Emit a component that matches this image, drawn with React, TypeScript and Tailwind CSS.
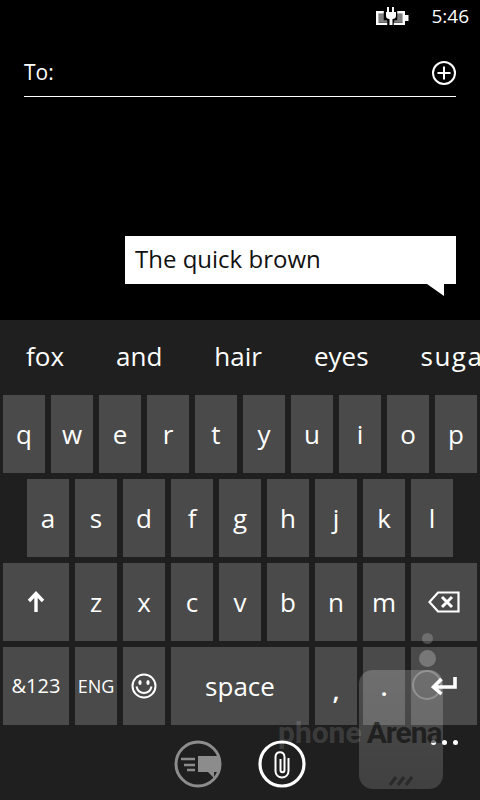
import React from 'react';

const Key: React.FC<{ w?: string; children: React.ReactNode; className?: string }> = ({ w = 'w-[42px]', children, className = 'text-[26px]' }) => (
  <div className={`${w} h-[78px] shrink-0 bg-[#4a4a4a] flex items-center justify-center text-white ${className}`}>{children}</div>
);

const LetterRow: React.FC<{ letters: string }> = ({ letters }) => (
  <>
    {letters.split('').map((l) => (
      <Key key={l}>{l}</Key>
    ))}
  </>
);

const Row: React.FC<{ className?: string; children: React.ReactNode }> = ({ className = 'pl-[3px]', children }) => (
  <div className={`flex gap-[6px] ${className}`}>{children}</div>
);

const BatteryIcon = () => (
  <svg width="33" height="20" viewBox="0 0 33 20" fill="none">
    <rect x="1.200" y="6.200" width="26.600" height="11.600" stroke="white" strokeWidth="2.400" />
    <path d="M2 7h7l3 9H2zM27 7h-7l-2 9h9z" fill="white" opacity="0.5" />
    <rect x="29" y="9" width="3.500" height="6" fill="white" />
    <path d="M9 6h11v7h-3.500v7h-4v-7H9z" fill="black" stroke="black" strokeWidth="2.500" />
    <path d="M11 1h2v5h3V1h2v5h2v4c0 2-1.500 3-3.500 3v6h-3v-6c-2 0-3.500-1-3.500-3V6h1z" fill="white" />
  </svg>
);

const PlusCircle = () => (
  <svg width="26" height="26" viewBox="0 0 26 26" fill="none" stroke="white">
    <circle cx="13" cy="13" r="11" strokeWidth="2" />
    <path d="M13 6.500v13M6.500 13h13" strokeWidth="2" />
  </svg>
);

const ShiftIcon = () => (
  <svg width="18" height="22" viewBox="0 0 18 22" fill="none" stroke="white" strokeWidth="3.400">
    <path d="M9 21V3M2 10l7-7.500 7 7.500" />
  </svg>
);

const BackspaceIcon = () => (
  <svg width="32" height="22" viewBox="0 0 32 22" fill="none" stroke="white">
    <path d="M10 1.500h20.500v19H10L1.500 11z" strokeWidth="2.200" />
    <path d="M14 6l10 10M24 6L14 16" strokeWidth="3" />
  </svg>
);

const Smiley = () => (
  <svg width="26" height="26" viewBox="0 0 26 26" fill="none" stroke="white">
    <circle cx="13" cy="13" r="11.500" strokeWidth="2" />
    <ellipse cx="9" cy="9.500" rx="1.600" ry="2.600" fill="white" stroke="none" />
    <ellipse cx="17" cy="9.500" rx="1.600" ry="2.600" fill="white" stroke="none" />
    <path d="M5.500 13.500c1 4.500 4 6.500 7.500 6.500s6.500-2 7.500-6.500" strokeWidth="2" />
  </svg>
);

const EnterIcon = () => (
  <svg width="26" height="20" viewBox="0 0 26 20" fill="none" stroke="white" strokeWidth="3.600">
    <path d="M24 1v10H4M10.500 3L2.500 11l8 7" />
  </svg>
);

const ChatCircle = () => (
  <svg width="48" height="48" viewBox="0 0 48 48" fill="none">
    <circle cx="24" cy="24" r="22" stroke="#8c8c8c" strokeWidth="3" />
    <path d="M7 19h14M10 25h11M13 30h8" stroke="#8c8c8c" strokeWidth="2.500" />
    <path d="M24 16h22v16h-6v6l-6-6H24z" fill="#8c8c8c" />
  </svg>
);

const ClipCircle = () => (
  <svg width="48" height="48" viewBox="0 0 48 48" fill="none" stroke="white">
    <circle cx="24" cy="24" r="22" strokeWidth="3.200" />
    <path d="M30.500 18v13c0 8.500-13 8.500-13 0V17c0-6.500 9-6.500 9 0v13c0 3-4 3-4 0V19" strokeWidth="2" />
  </svg>
);

const Watermark = () => (
  <div className="absolute left-[278px] top-[632px] w-[190px] h-[160px] pointer-events-none">
    <div className="absolute left-[81px] top-[38px] w-[84px] h-[119px] rounded-[14px] bg-gradient-to-b from-white/20 to-white/15">
      <div className="absolute left-[30px] bottom-[3px]">
        <svg width="24" height="10" viewBox="0 0 24 10" stroke="#2a2a2a" strokeWidth="3">
          <path d="M1 9l6-8M9 9l6-8M17 9l6-8" />
        </svg>
      </div>
    </div>
    <div className="absolute left-[144px] top-[1px] size-[11px] rounded-full bg-white/20" />
    <div className="absolute left-[141px] top-[18px] size-[17px] rounded-full bg-white/25" />
    <div className="absolute left-[134px] top-[38px] size-[30px] rounded-full border-2 border-white/25" />
    <div className="absolute left-0 top-[84px] flex font-['Roboto',sans-serif] font-bold text-[30px] leading-[34px]">
      <span className="text-white/15">phone</span>
      <span className="ml-[5px] tracking-[-1px] text-black/55">Arena</span>
    </div>
  </div>
);

export default function App() {
  return (
    <div className="relative w-[480px] h-[800px] overflow-hidden bg-black flex flex-col font-['Open_Sans',sans-serif]">
      {/* status bar */}
      <div className="h-[32px] flex items-center justify-end pr-[11px] text-white">
        <BatteryIcon />
        <span className="ml-[22px] text-[19px] leading-none">5:46</span>
      </div>

      {/* recipient */}
      <div className="mx-[24px] mt-[24px] h-[41px] border-b border-white flex items-start justify-between">
        <span className="text-white text-[21px] leading-[32px]">To:</span>
        <span className="mt-[4px] mr-[-1px]">
          <PlusCircle />
        </span>
      </div>

      {/* message bubble */}
      <div className="flex-1 flex flex-col items-end pr-[24px] pt-[139px]">
        <div className="relative w-[331px] h-[48px] bg-white flex items-center pl-[10px] pb-[2px] text-[#111] text-[24px] leading-none">
          The quick brown
          <svg className="absolute right-[12px] top-[48px]" width="17" height="12" viewBox="0 0 17 12">
            <path d="M0 0h17v12z" fill="white" />
          </svg>
        </div>
      </div>

      {/* keyboard */}
      <div className="h-[480px] bg-[#1f1f1f] flex flex-col">
        <div className="h-[75px] flex items-center gap-[52px] pl-[26px] pb-[2px] text-white text-[26px] overflow-hidden whitespace-nowrap">
          <span>fox</span>
          <span>and</span>
          <span>hair</span>
          <span>eyes</span>
          <span className="tracking-[1.5px]">sugar</span>
        </div>
        <div className="flex flex-col gap-[6px]">
          <Row>
            <LetterRow letters="qwertyuiop" />
          </Row>
          <Row className="pl-[27px]">
            <LetterRow letters="asdfghjkl" />
          </Row>
          <Row>
            <Key w="w-[66px]"><ShiftIcon /></Key>
            <LetterRow letters="zxcvbnm" />
            <Key w="w-[66px]"><BackspaceIcon /></Key>
          </Row>
          <Row>
            <Key w="w-[66px]" className="text-[20px]">&amp;123</Key>
            <Key className="text-[18px]">ENG</Key>
            <Key><Smiley /></Key>
            <Key w="w-[138px]" className="text-[26px] font-medium">space</Key>
            <Key className="text-[26px] font-semibold pt-[8px]">,</Key>
            <Key className="text-[26px] font-semibold">.</Key>
            <Key w="w-[66px]"><EnterIcon /></Key>
          </Row>
        </div>
        <div className="relative flex-1 flex justify-center gap-[36px] pt-[15px]">
          <ChatCircle />
          <ClipCircle />
          <div className="absolute left-[431px] top-[15px] flex gap-[6px]">
            <span className="size-[5px] rounded-full bg-white" />
            <span className="size-[5px] rounded-full bg-white" />
            <span className="size-[5px] rounded-full bg-white" />
          </div>
        </div>
      </div>
      <Watermark />
    </div>
  );
}
